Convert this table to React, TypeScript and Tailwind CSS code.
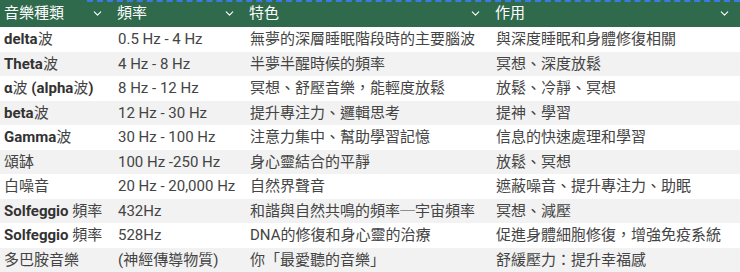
import { ChevronDown } from 'lucide-react';

const COLUMNS = [
  { title: '音樂種類', width: 'w-[113px]' },
  { title: '頻率', width: 'w-[132px]' },
  { title: '特色', width: 'w-[246px]' },
  { title: '作用', width: 'flex-1' },
];

const ROWS: [string, string, string, string][] = [
  ['delta波', '0.5 Hz - 4 Hz', '無夢的深層睡眠階段時的主要腦波', '與深度睡眠和身體修復相關'],
  ['Theta波', '4 Hz - 8 Hz', '半夢半醒時候的頻率', '冥想、深度放鬆'],
  ['α波 (alpha波)', '8 Hz - 12 Hz', '冥想、舒壓音樂，能輕度放鬆', '放鬆、冷靜、冥想'],
  ['beta波', '12 Hz - 30 Hz', '提升專注力、邏輯思考', '提神、學習'],
  ['Gamma波', '30 Hz - 100 Hz', '注意力集中、幫助學習記憶', '信息的快速處理和學習'],
  ['頌缽', '100 Hz -250 Hz', '身心靈結合的平靜', '放鬆、冥想'],
  ['白噪音', '20 Hz - 20,000 Hz', '自然界聲音', '遮蔽噪音、提升專注力、助眠'],
  ['Solfeggio 頻率', '432Hz', '和諧與自然共鳴的頻率─宇宙頻率', '冥想、減壓'],
  ['Solfeggio 頻率', '528Hz', 'DNA的修復和身心靈的治療', '促進身體細胞修復，增強免疫系統'],
  ['多巴胺音樂', '(神經傳導物質)', '你「最愛聽的音樂」', '舒緩壓力：提升幸福感'],
];

// latin runs are bold in the first column, CJK stays regular
function NameCell({ text }: { text: string }) {
  const parts = text.split(/([\u3400-\u9fff]+)/).filter((p) => p.length > 0);
  return (
    <>
      {parts.map((p, i) =>
        /[\u3400-\u9fff]/.test(p) ? (
          <span key={i} className="text-[#444]">{p}</span>
        ) : (
          <span key={i} className="font-bold text-[#333]">{p}</span>
        ),
      )}
    </>
  );
}

export default function App() {
  return (
    <div className="relative w-[740px] h-[272px] overflow-hidden bg-white font-['Roboto','Noto_Sans_CJK_TC',sans-serif] text-[15px]">
      <div className="absolute left-[87px] right-0 top-0 h-0 border-t-2 border-dashed border-[#3b7be0]" />
      <div className="flex h-[27px] items-center bg-[#2f6a4d] text-white">
        {COLUMNS.map((c) => (
          <div key={c.title} className={`${c.width} flex items-center justify-between pl-[4px] pr-[9px]`}>
            <span className="leading-none">{c.title}</span>
            <ChevronDown size={13} strokeWidth={2} />
          </div>
        ))}
      </div>
      {ROWS.map((r, i) => (
        <div
          key={i}
          className={`flex h-[24.5px] items-center ${i % 2 === 1 ? 'bg-[#f2f2f2]' : 'bg-white'}`}
        >
          <div className="w-[113px] pl-[4px] whitespace-nowrap">
            <NameCell text={r[0]} />
          </div>
          <div className="w-[132px] pl-[5px] text-[#444] whitespace-nowrap">{r[1]}</div>
          <div className="w-[246px] pl-[5px] text-[#444] whitespace-nowrap">{r[2]}</div>
          <div className="flex-1 pl-[5px] text-[#444] whitespace-nowrap">{r[3]}</div>
        </div>
      ))}
    </div>
  );
}
